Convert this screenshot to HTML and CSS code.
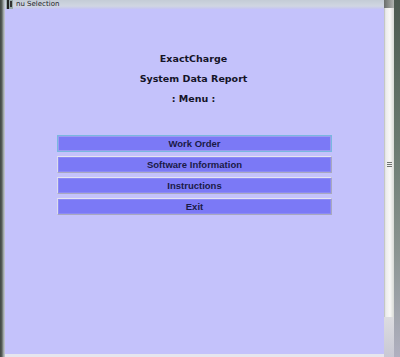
FILE: index.html
```html
<!DOCTYPE html>
<html>
<head>
<meta charset="utf-8">
<link rel="stylesheet" href="styles.css">
</head>
<body>
<div class="window">
  <div class="left-edge"></div>
  <div class="main">
    <div class="titlebar">
      <svg class="app-icon" width="7" height="9" viewBox="0 0 7 9">
        <rect x="0" y="0" width="7" height="9" fill="#9aa"/>
        <rect x="1" y="0" width="2" height="9" fill="#222"/>
        <rect x="4" y="1" width="2" height="6" fill="#333"/>
      </svg>
      <span class="title-text">nu Selection</span>
    </div>
    <div class="content">
      <div class="heading">
        <div>ExactCharge</div>
        <div>System Data Report</div>
        <div>: Menu :</div>
      </div>
      <div class="menu">
        <button class="menu-btn focused">Work Order</button>
        <button class="menu-btn">Software Information</button>
        <button class="menu-btn">Instructions</button>
        <button class="menu-btn">Exit</button>
      </div>
    </div>
    <div class="bottom-edge"></div>
  </div>
  <div class="scrollbar">
    <div class="scroll-top"></div>
    <div class="thumb"><span class="grip"></span></div>
    <div class="scroll-bottom"></div>
  </div>
  <div class="right-edge"></div>
</div>
</body>
</html>
```

FILE: styles.css
```css
html, body {
  margin: 0;
  padding: 0;
  background: #c4c2fb;
}
.window {
  display: flex;
  width: 400px;
  height: 357px;
  overflow: hidden;
}
.left-edge {
  width: 5px;
  background: linear-gradient(to right, #3e4440 0, #5a605c 2px, #8f9895 3px, #c9cbd8 5px);
}
.main {
  flex: 1;
  display: flex;
  flex-direction: column;
}
.titlebar {
  height: 9px;
  display: flex;
  align-items: center;
  background: linear-gradient(to bottom, #c4ccd6 0, #d0d6e2 6px, #c5c4f2 9px);
  overflow: hidden;
}
.app-icon {
  margin-left: 1px;
  display: block;
}
.title-text {
  margin-left: 3px;
  font-family: "DejaVu Sans", sans-serif;
  font-size: 7px;
  line-height: 9px;
  color: #1d2228;
}
.content {
  flex: 1;
  display: flex;
  flex-direction: column;
}
.heading {
  padding-top: 40px;
  font-family: "DejaVu Sans", Verdana, sans-serif;
  font-weight: bold;
  font-size: 9.5px;
  line-height: 20px;
  color: #141428;
  text-align: center;
  padding-right: 2px;
}
.menu {
  margin-top: 26px;
  margin-left: 52px;
  width: 275px;
  display: flex;
  flex-direction: column;
  gap: 4px;
}
.menu-btn {
  height: 17px;
  margin: 0;
  padding: 0;
  background: #7b79f6;
  border: 1px solid #a8a8c0;
  border-top-color: #e4e4f0;
  border-left-color: #dcdcec;
  box-shadow: inset 0 0 0 1px #8c8af4;
  font-family: "Liberation Sans", Arial, sans-serif;
  font-size: 9.5px;
  font-weight: bold;
  color: #1a1a46;
  text-align: center;
}
.menu-btn.focused {
  border-color: #7ab8e0;
  box-shadow: inset 0 0 0 1px #9a9cf0;
}
.bottom-edge {
  height: 3px;
  background: #e6e6ee;
}
.scrollbar {
  width: 10px;
  display: flex;
  flex-direction: column;
  background: linear-gradient(to right, #d0d0d8 0, #ececec 2px, #f8f8f6 6px, #d8dad6 10px);
}
.scroll-top {
  height: 8px;
  background: linear-gradient(to right, #6a6e6c, #b0b4b0);
}
.thumb {
  flex: 1;
  display: flex;
  align-items: center;
  justify-content: center;
  border-left: 1px solid #c4c8c4;
}
.grip {
  width: 5px;
  height: 5px;
  background: repeating-linear-gradient(to bottom, #707470 0, #707470 1px, #f0f0f0 1px, #f0f0f0 2px);
  margin-top: 4px;
}
.scroll-bottom {
  height: 40px;
  background: linear-gradient(to bottom, #dcdce0, #c8c8d4);
}
.right-edge {
  width: 6px;
  background: linear-gradient(to bottom, #4c5a50, #6a7a70 40%, #8a9490 70%, #b0b0c0);
}
```
